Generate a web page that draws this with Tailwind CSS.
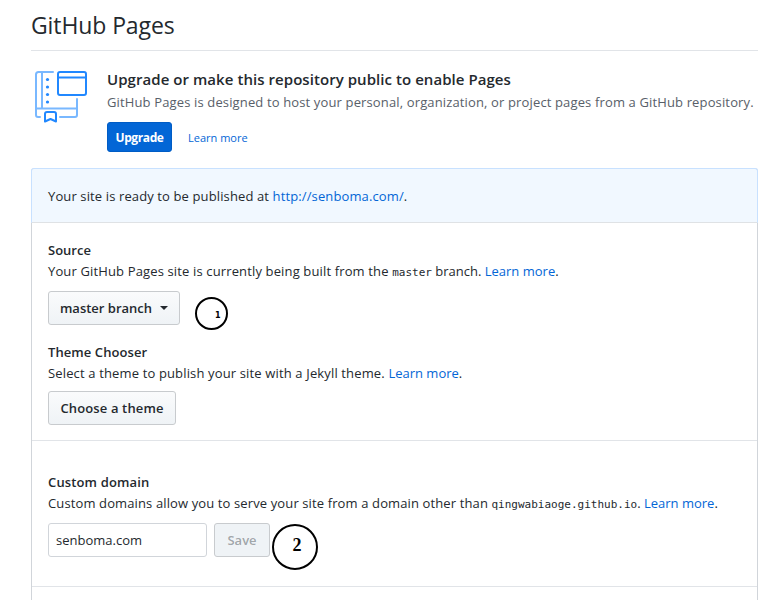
<!DOCTYPE html>
<html lang="en"><head><meta charset="utf-8"><title>GitHub Pages</title>
<script src="https://cdn.jsdelivr.net/npm/@tailwindcss/browser@4"></script></head>
<body class="bg-white text-[#24292e] font-['Open_Sans',sans-serif] text-[13px] leading-[21px]">
<main class="ml-[31px] w-[727px] h-[600px] overflow-hidden whitespace-nowrap">
<header class="h-[51px] border-b border-[#e1e4e8] pt-[8px]"><h2 class="text-[23px] leading-[35px] tracking-[-0.1px]">GitHub Pages</h2></header>
<section class="flex h-[117px] pt-[18px]">
<svg class="w-[60px] h-[60px] mr-4 shrink-0" viewBox="0 0 60 60" fill="none" stroke-linecap="round" stroke-linejoin="round">
<g stroke="#79b8ff" stroke-width="2"><path d="M22 3H7.500Q5 3 5 5.500V46Q5 48 7 48H9M11 3V39M5 39.500H46M46 30V46Q46 48 44 48H29"/></g>
<g stroke="#2188ff" stroke-width="2"><rect x="27" y="3" width="28" height="23" rx="2"/><path d="M27 8.500H55M14 52.500V45Q14 43 16 43H23Q25 43 25 45V52.500L19.500 50Z"/></g>
<g fill="#2188ff"><circle cx="16.500" cy="10.500" r="1.600"/><circle cx="16.500" cy="18" r="1.600"/><circle cx="16.500" cy="25.500" r="1.600"/><circle cx="16.500" cy="33" r="1.600"/></g>
</svg>
<div>
<h3 class="-mt-px text-[15px] leading-[22px] font-semibold tracking-[0.055px]">Upgrade or make this repository public to enable Pages</h3>
<p class="mt-[2px] text-[#586069] tracking-[0.138px]">GitHub Pages is designed to host your personal, organization, or project pages from a GitHub repository.</p>
<div class="flex items-center mt-[9px]"><button class="w-[65px] h-[30px] rounded-[3px] border border-[#005cc5] bg-[#0366d6] text-white text-[12px] font-bold tracking-[-0.4px]">Upgrade</button><a class="ml-4 text-[11px] text-[#0366d6]">Learn more</a></div>
</div></section>
<section class="h-[500px] rounded-t-[3px] border border-[#d1d5da]">
<div class="-mx-px -mt-px h-[55px] rounded-t-[3px] border border-[#c8e1ff] border-b-[#dfe2e5] bg-[#f1f8ff] pl-4 pt-[17px] tracking-[0.12px]">Your site is ready to be published at <a class="text-[#0366d6]">http://senboma.com/</a>.</div>
<div class="relative h-[218px] border-b border-[#e1e4e8] pl-4 pt-[17px]">
<h4 class="font-semibold">Source</h4>
<p><span class="tracking-[0.14px]">Your GitHub Pages site is currently being built from the </span><code class="font-['DejaVu_Sans_Mono',monospace] text-[11px]">master</code> branch. <a class="text-[#0366d6]">Learn more</a>.</p>
<button class="flex items-center justify-center gap-2 mt-[8px] w-[132px] h-[34px] rounded-[3px] border border-[#c8cbce] bg-linear-to-b from-[#fafbfc] to-[#eff3f6] font-semibold"><span>master branch</span><i class="border-x-4 border-x-transparent border-t-4 border-t-[#24292e]"></i></button>
<h4 class="mt-[17px] font-semibold tracking-[0.08px]">Theme Chooser</h4>
<p><span class="tracking-[0.145px]">Select a theme to publish your site with a Jekyll theme. </span><a class="text-[#0366d6]">Learn more</a>.</p>
<button class="mt-[7px] w-[128px] h-[34px] rounded-[3px] border border-[#c8cbce] bg-linear-to-b from-[#fafbfc] to-[#eff3f6] font-semibold tracking-[0.14px]">Choose a theme</button>
<svg class="absolute left-[162px] top-[72px] w-[36px] h-[36px]" viewBox="0 0 36 36"><circle cx="17.500" cy="18.500" r="15.500" fill="none" stroke="#000" stroke-width="2"/><text x="21" y="23" font-size="8" font-weight="700" font-family="DejaVu Sans, sans-serif">1</text></svg>
</div>
<div class="relative h-[146px] border-b border-[#e1e4e8] pl-4 pt-[31px]">
<h4 class="font-semibold tracking-[0.14px]">Custom domain</h4>
<p><span class="tracking-[0.12px]">Custom domains allow you to serve your site from a domain other than </span><code class="font-['DejaVu_Sans_Mono',monospace] text-[11px]">qingwabiaoge.github.io</code>. <a class="text-[#0366d6]">Learn more</a>.</p>
<div class="flex mt-[8px] gap-[7px]"><div class="w-[159px] h-[34px] rounded-[3px] border border-[#d1d5da] pl-[7px] pt-[6px] leading-[20px]">senboma.com</div><button class="w-[56px] h-[34px] rounded-[3px] border border-[#c8cbce] bg-[#eff3f6] font-semibold text-[#24292e]/40">Save</button></div>
<svg class="absolute left-[240px] top-[82px] w-[48px] h-[48px]" viewBox="0 0 48 48"><circle cx="23" cy="24" r="22" fill="none" stroke="#000" stroke-width="2"/><text x="20.500" y="28" font-size="18" font-weight="700" font-family="Liberation Serif, serif">2</text></svg>
</div>
</section>
</main>
</body></html>
